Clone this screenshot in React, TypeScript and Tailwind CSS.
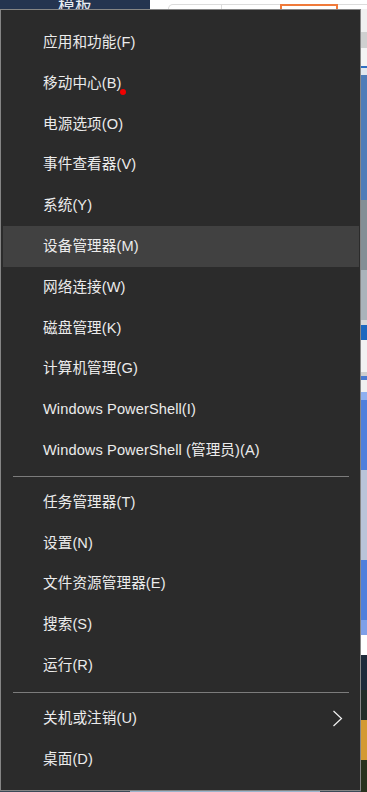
import React from "react";

const font = '"Liberation Sans", "Noto Sans CJK SC", sans-serif';

const groups: string[][] = [
  [
    "应用和功能(F)",
    "移动中心(B)",
    "电源选项(O)",
    "事件查看器(V)",
    "系统(Y)",
    "设备管理器(M)",
    "网络连接(W)",
    "磁盘管理(K)",
    "计算机管理(G)",
    "Windows PowerShell(I)",
    "Windows PowerShell (管理员)(A)",
  ],
  ["任务管理器(T)", "设置(N)", "文件资源管理器(E)", "搜索(S)", "运行(R)"],
  ["关机或注销(U)", "桌面(D)"],
];

// slices of whatever window sits behind the menu on the right edge
const strip: { h: number; c: string }[] = [
  { h: 23, c: "#f0f0f0" },
  { h: 16, c: "#cfd0d0" },
  { h: 18, c: "#f4f4f4" },
  { h: 2, c: "#2f6fc2" },
  { h: 7, c: "#e2e8ef" },
  { h: 125, c: "#4f7cb8" },
  { h: 70, c: "#848f95" },
  { h: 50, c: "#aab3ba" },
  { h: 5, c: "#d8d8d8" },
  { h: 15, c: "#1e68bf" },
  { h: 32, c: "#f2f2f2" },
  { h: 4, c: "#cfcfcf" },
  { h: 4, c: "#4a7ad0" },
  { h: 12, c: "#f0f0f0" },
  { h: 8, c: "#8eb0f0" },
  { h: 70, c: "#4f7fdc" },
  { h: 90, c: "#b9c4d8" },
  { h: 60, c: "#4f7fdc" },
  { h: 15, c: "#7fa0e8" },
  { h: 20, c: "#ffffff" },
  { h: 35, c: "#1e2a3a" },
  { h: 30, c: "#232d28" },
  { h: 40, c: "#d39a32" },
  { h: 32, c: "#28321e" },
];

function Item({ label, active, more }: { label: string; active?: boolean; more?: boolean }) {
  return (
    <div className={`flex h-[40.8px] items-center pl-[40px] pr-[10px] ${active ? "bg-[#414141]" : ""}`}>
      <span className="text-[14.6px] leading-none tracking-[0.1px] text-[#ececec]">{label}</span>
      {more && (
        <svg className="ml-auto mr-[6px]" width="11" height="17" viewBox="0 0 11 17">
          <polyline points="1.5,1 9.5,8.5 1.5,16" fill="none" stroke="#f2f2f2" strokeWidth="1.2" />
        </svg>
      )}
    </div>
  );
}

export default function App() {
  return (
    <div className="relative flex h-[792px] w-[367px] flex-col overflow-hidden bg-[#3a4a5a]" style={{ fontFamily: font }}>
      <div className="flex h-[9px] shrink-0">
        <div className="w-[150px] overflow-hidden bg-[#243450] pl-[58px]">
          <div className="-mt-[4px] text-[17px] leading-none text-[#e8ecf2]" style={{ fontFamily: '"Noto Sans CJK SC", sans-serif' }}>模板</div>
        </div>
        <div className="flex flex-1 bg-white pt-[4px]">
          <div className="w-[18px] border-t border-white" />
          <div className="w-[54px] rounded-tl-[8px] border-l border-t border-r border-[#dcdcdc]" />
          <div className="w-[58px] border-t border-[#dcdcdc]" />
          <div className="w-[58px] border-x-2 border-t-2 border-[#f07a3a]" />
          <div className="flex-1 border-t border-[#dcdcdc]" />
        </div>
      </div>
      <div className="flex flex-1">
        <div className="flex w-[361px] flex-col bg-[#2b2b2b]">
          <div className="h-[782px] border border-[#858585] bg-[#2b2b2b] pl-[2px] pr-px pt-[12px]">
            {groups.map((g, gi) => (
              <div key={gi}>
                {gi > 0 && (
                  <div className={`${gi === 1 ? "pt-[5px] pb-[5px]" : "pt-[6px] pb-[5px]"} pl-[10px] pr-[10px]`}>
                    <div className="h-px bg-[#7c7c7c]" />
                  </div>
                )}
                {g.map((label) => (
                  <Item key={label} label={label} active={label === "设备管理器(M)"} more={label === "关机或注销(U)"} />
                ))}
              </div>
            ))}
          </div>
          <div className="flex h-px">
            <div className="w-[130px] bg-[#3b4a58]" />
            <div className="w-[190px] bg-[#9ab4cc]" />
            <div className="flex-1 bg-[#3b4a58]" />
          </div>
        </div>
        <div className="flex flex-1 flex-col">
          {strip.map((s, i) => (
            <div key={i} className="shrink-0" style={{ height: s.h, background: s.c }} />
          ))}
        </div>
      </div>
      <div className="absolute left-[120px] top-[89px] h-[6px] w-[6px] rounded-full bg-[#f00000]" />
    </div>
  );
}
